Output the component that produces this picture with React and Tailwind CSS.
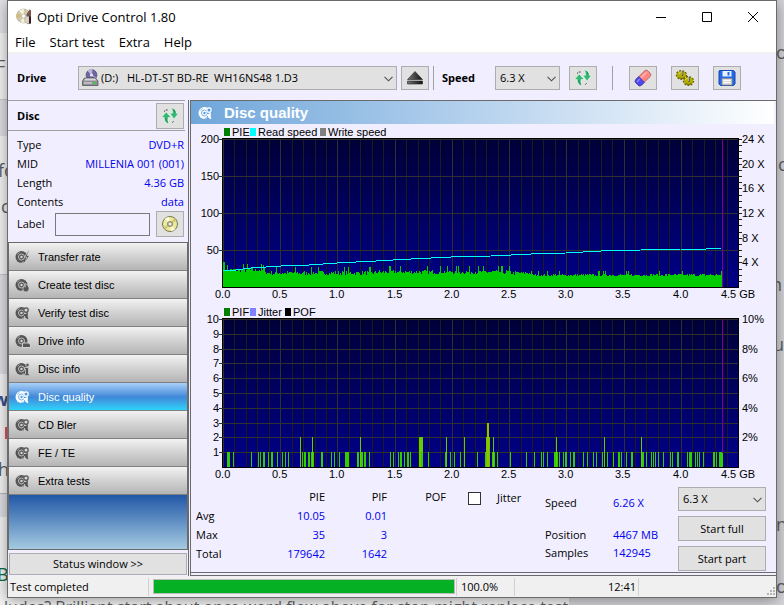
import React from 'react';

const navItems = [
    { label: 'Transfer rate', badge: 'bolt' },
    { label: 'Create test disc', badge: 'flame' },
    { label: 'Verify test disc', badge: 'lens' },
    { label: 'Drive info', badge: 'drive' },
    { label: 'Disc info', badge: 'info' },
    { label: 'Disc quality', badge: 'lens', active: true },
    { label: 'CD Bler', badge: 'lens' },
    { label: 'FE / TE', badge: 'lens' },
    { label: 'Extra tests', badge: 'lens' },
];

const discInfo = [
    ['Type', 'DVD+R'],
    ['MID', 'MILLENIA 001 (001)'],
    ['Length', '4.36 GB'],
    ['Contents', 'data'],
];

// Plot area inside each chart, in chart units
const LEFT = 32;
const RIGHT = 547;
const TOP = 14;
const BOTTOM = 162;
const END = 531;

// [x, width, count] of every PIF reading
const pif = [
    [36, 3, 1], [42, 1, 1], [60, 1, 1], [67, 1, 1], [69, 1, 1], [72, 2, 1], [77, 1, 1], [80, 2, 1],
    [86, 1, 1], [91, 1, 1], [94, 1, 1], [97, 1, 1], [109, 1, 2], [111, 1, 1], [113, 2, 1], [117, 2, 1],
    [120, 3, 1], [121, 1, 2], [130, 2, 1], [140, 1, 1], [143, 1, 1], [148, 1, 1], [154, 4, 1], [166, 2, 1],
    [169, 1, 2], [170, 2, 1], [173, 2, 1], [178, 1, 1], [199, 1, 1], [202, 1, 1], [207, 1, 1], [209, 2, 1],
    [213, 1, 1], [216, 2, 1], [219, 1, 1], [228, 4, 2], [230, 2, 1], [237, 1, 1], [254, 1, 1], [255, 1, 2],
    [259, 1, 1], [263, 1, 1], [269, 1, 1], [273, 1, 2], [286, 1, 1], [294, 1, 1], [295, 4, 2], [296, 2, 3],
    [301, 3, 1], [302, 1, 2], [306, 1, 1], [319, 1, 1], [335, 1, 1], [343, 1, 1], [350, 1, 1], [352, 1, 1],
    [356, 1, 1], [363, 4, 1], [365, 1, 2], [368, 1, 1], [372, 1, 1], [374, 2, 1], [379, 1, 1], [382, 2, 1],
    [392, 1, 1], [396, 1, 1], [402, 1, 1], [405, 1, 1], [411, 1, 1], [413, 1, 2], [416, 1, 1], [422, 1, 1],
    [427, 2, 1], [430, 1, 1], [435, 1, 1], [440, 2, 1], [450, 1, 2], [451, 2, 1], [455, 1, 1], [460, 1, 1],
    [462, 1, 1], [464, 1, 1], [467, 1, 1], [472, 1, 1], [479, 1, 1], [481, 1, 1], [486, 2, 1], [496, 1, 1],
    [498, 3, 1], [504, 1, 1], [506, 1, 1], [508, 1, 1], [512, 1, 1], [522, 2, 1], [525, 1, 1], [528, 4, 1],
];
const pifColors = ['', '#33cc00', '#66cc00', '#99bb00'];

const readSpeed = [
    [32, 146], [45, 145], [60, 143], [90, 141], [118, 140], [146, 138], [185, 136], [220, 134], [260, 132],
    [300, 131], [340, 129], [375, 128], [410, 126], [450, 125], [490, 124], [515, 124], [530, 123],
];

// Outline of the PIE error area, one step per unit
function pieArea() {
    let seed = 7;
    let d = `M${LEFT} ${BOTTOM}`;
    for (let x = LEFT; x < END; x++) {
        seed = (seed * 16807) % 2147483647;
        const r = seed / 2147483647;
        const calm = x > 340;
        let h = (calm ? 11 : 12) + r * (calm ? 2 : 4);
        if (x < 75) h += 3;
        if (x > 185 && x < 320) h += 1;
        if (r > 0.92) h += calm ? 3 : 4;
        if (x < 34) h = 25;
        if (x === 36 || x === 72) h = 22;
        d += `V${BOTTOM - Math.round(h)}H${x + 1}`;
    }
    return `${d}V${BOTTOM}Z`;
}

function Chart({ id, title, legend, rows, leftLabels, rightLabels, minorTicks, children }) {
    const gridX = Array.from({ length: 45 }, (_, i) => Math.round(LEFT + (i * (RIGHT - LEFT)) / 45));
    const rowY = (i) => Math.round(TOP + (i * (BOTTOM - TOP)) / rows);
    return (
        <svg viewBox="0 0 583 180" className="block h-auto w-full" role="img" aria-label={title}
            fontFamily="'Liberation Sans', Arial, sans-serif" fontSize="11" fill="#000">
            <defs>
                <linearGradient id={id} x1="0" y1="0" x2="0" y2="1">
                    <stop offset="0" stopColor="#000038" />
                    <stop offset="1" stopColor="#000088" />
                </linearGradient>
            </defs>
            {legend.map(([text, color, x]) => (
                <g key={text}>
                    <rect x={x} y="3" width="6" height="8" fill={color} />
                    <text x={x + 8} y="11">{text}</text>
                </g>
            ))}
            <g shapeRendering="crispEdges">
                <rect x={LEFT - 1} y={TOP - 1} width={RIGHT - LEFT + 2} height={BOTTOM - TOP + 2} fill="#000" />
                <rect x={LEFT} y={TOP} width={RIGHT - LEFT} height={BOTTOM - TOP} fill={`url(#${id})`} />
                {gridX.map((x, i) => (
                    <rect key={x} x={x} y={TOP} width="1" height={BOTTOM - TOP} fill={i % 5 ? '#1c1c1c' : '#303030'} />
                ))}
                {Array.from({ length: rows }, (_, i) => (
                    <rect key={i} x={LEFT - 4} y={rowY(i)} width={RIGHT - LEFT + 4} height="1" fill="#303030" />
                ))}
                {minorTicks && Array.from({ length: 24 }, (_, i) => (
                    <rect key={i} x={RIGHT + 1} y={Math.round(TOP + (i * 148) / 24)} width="3" height="1" fill="#222" />
                ))}
                {children}
                <rect x={END} y={TOP} width="1" height={id === 'pifBg' ? 134 : 148} fill="#800080" />
            </g>
            {leftLabels.map((text, i) => (
                <text key={text} x={LEFT - 4} y={rowY(i) + 4} textAnchor="end">{text}</text>
            ))}
            {rightLabels.map((text, i) => (
                <text key={text} x={RIGHT + 4} y={Math.round(TOP + (i * 148) / rightLabels.length) + 4}>{text}</text>
            ))}
            {Array.from({ length: 9 }, (_, i) => (
                <text key={i} x={Math.round(LEFT + i * 57.2) - 8} y="173">{(i / 2).toFixed(1)}</text>
            ))}
            <text x={RIGHT} y="173" textAnchor="middle">4.5 GB</text>
        </svg>
    );
}

function NavIcon({ badge, active }) {
    const fg = active ? '#ffffff' : '#555555';
    const hole = active ? '#4f9be6' : '#d9d9d9';
    return (
        <svg width="16" height="14" viewBox="0 0 16 14" aria-hidden="true">
            <circle cx="6.5" cy="7" r="6" fill={fg} />
            <circle cx="6.5" cy="7" r="3" fill="none" stroke={hole} strokeWidth="0.8" />
            <circle cx="6.5" cy="7" r="1.2" fill={hole} />
            <path d="M2.5 4.5a5 5 0 0 1 2-2M9 11.8a5 5 0 0 1-2.5.5" stroke={hole} strokeWidth="0.7" fill="none" />
            {badge === 'bolt' && <path d="M13.5 0.5 9.5 7h2.3l-1.8 6 4.5-7.5h-2.4l2-5z" fill={fg} stroke={hole} strokeWidth="0.7" />}
            {badge === 'flame' && <path d="M10 5.5c3 1.5 4 3.5 4 5.3a3 3 0 0 1-6 .2c0-1.5 1-2 .8-3.2 1 .3 1.3 1 1.4 1.5.4-1.3.3-2.5-.2-3.8z" fill={fg} stroke={hole} strokeWidth="0.6" />}
            {badge === 'lens' && (
                <g fill="none" stroke={hole}>
                    <path d="M8.5 2.5h6v4h-6z" fill={hole} stroke="none" />
                    <circle cx="11" cy="4" r="2.2" stroke={fg} strokeWidth="1.3" />
                    <path d="M12 6.5v6M9 8.5l4 4.3" stroke={fg} strokeWidth="1.6" />
                    <path d="M9 7.5h2.5M9.5 10v3" strokeWidth="0.8" />
                </g>
            )}
            {badge === 'drive' && <path d="M7.5 9h6.5l1.5 2v2.5h-8z" fill={fg} stroke={hole} strokeWidth="0.9" />}
            {badge === 'info' && (
                <g stroke={hole} strokeWidth="0.7" fill={fg}>
                    <circle cx="12.5" cy="3" r="1.7" />
                    <path d="M9.5 5.5h4v6.5h1v1.7H9.3V12h1.2V7.2h-1z" />
                </g>
            )}
        </svg>
    );
}

function RefreshIcon() {
    return (
        <svg width="18" height="18" viewBox="0 0 18 18" aria-hidden="true">
            <g fill="#32b872" stroke="#fff" strokeWidth="0.5">
                <path d="M5.2 5 .5 10.5h2.7c0 3.200 1.300 5.500 4.800 6.500-1-2-1.200-4-.9-6.500h3z" />
                <path d="M9.500.8c1.800 1.200 2.200 3 2 5.500H8.800L13 12l4.500-5.700h-2.300C15.200 3.500 13.500 1.300 9.500.8z" />
            </g>
            <path d="M3 4.500 5 3h2.500M12.500 14.500 10.500 16" stroke="#333" strokeDasharray="1.500 1" fill="none" />
            <path d="M4.800 11c0 2 .6 3.500 1.800 4.700M12.500 2.300l1.800 3.200" stroke="#1e7a4a" strokeWidth="0.8" fill="none" />
        </svg>
    );
}

function EraserIcon() {
    return (
        <svg width="18" height="18" viewBox="0 0 18 18" aria-hidden="true">
            <g transform="rotate(-45 9 9)">
                <rect x="0.5" y="5" width="17" height="8" rx="2.5" fill="#ff8585" stroke="#a05a5a" strokeWidth="0.7" />
                <path d="M7 5H3A2.5 2.5 0 0 0 .5 7.5v3A2.5 2.5 0 0 0 3 13h4z" fill="#4a4af0" stroke="#3434a8" strokeWidth="0.7" />
                <path d="M8 7.5h8" stroke="#ffb5b5" strokeWidth="1.5" />
                <path d="M2 7.5h4" stroke="#8585ff" strokeWidth="1.5" />
            </g>
        </svg>
    );
}

function GearsIcon() {
    return (
        <svg width="20" height="18" viewBox="0 0 20 18" aria-hidden="true">
            <g fill="#b5ad00" stroke="#5c5700" strokeWidth="0.7">
                <ellipse cx="6.500" cy="6" rx="4.800" ry="4" strokeWidth="1.800" strokeDasharray="1.800 1.200" />
                <ellipse cx="6.500" cy="6" rx="4.500" ry="3.700" stroke="none" />
                <ellipse cx="13.500" cy="12" rx="4.800" ry="4" strokeWidth="1.800" strokeDasharray="1.800 1.200" />
                <ellipse cx="13.500" cy="12" rx="4.500" ry="3.700" stroke="none" />
            </g>
            <path d="M3.500 5c.8-1.500 2-2 3-2M10.500 11c.8-1.500 2-2 3-2" stroke="#efe84a" fill="none" />
            <path d="M3.500 8.300c1.500 1.400 4.500 1.400 6 0M10.500 14.300c1.500 1.400 4.500 1.400 6 0" stroke="#6e6800" fill="none" />
            <path d="M7.500 2v5M14 8v5" stroke="#5a5a4a" strokeWidth="1.500" />
            <path d="M7 2v4M13.500 8v4" stroke="#ddd" strokeWidth="0.6" />
        </svg>
    );
}

function SaveIcon() {
    return (
        <svg width="18" height="16" viewBox="0 0 18 16" aria-hidden="true">
            <path d="M1.5.5h14l1.500 1.500v12l-1.500 1.500h-13L1 14V1z" fill="#2469e8" stroke="#1747b4" />
            <path d="M4.5 1h9v5.5h-9z" fill="#e9f2ff" />
            <path d="M9.5 2h2v3.5h-2z" fill="#2469e8" />
            <path d="M4 8.5h10V15H4z" fill="#dcdcdc" stroke="#8c8c8c" strokeWidth="0.8" />
            <path d="M5.5 10.5h7M5.5 12.5h7" stroke="#fff" />
        </svg>
    );
}

function DriveIcon() {
    return (
        <svg width="18" height="18" viewBox="0 0 18 18" aria-hidden="true">
            <circle cx="10.5" cy="6" r="5.5" fill="#6f649c" stroke="#4d4570" strokeWidth="0.6" />
            <path d="M10.5 6 7 1.8a5.5 5.5 0 0 1 4-1.2zM10.5 6l4.5 3" fill="#bdb5e0" stroke="#bdb5e0" />
            <circle cx="10.5" cy="6" r="1.6" fill="#e9e6f5" />
            <path d="M3.5 9h11l2.500 3v4.500H1.500V12z" fill="#8e9096" stroke="#46484d" strokeWidth="0.7" />
            <path d="M4.5 9.500h9.500l1.500 2H3z" fill="#d7d8db" />
            <path d="M3 14h8" stroke="#e6e6e6" />
            <path d="M13 13.300h2V15h-2z" fill="#22dd33" />
        </svg>
    );
}

function AppIcon() {
    return (
        <svg width="16" height="17" viewBox="0 0 16 17" aria-hidden="true">
            <circle cx="7.5" cy="8" r="7" fill="#cfc9ae" stroke="#a5a08c" strokeWidth="0.6" />
            <path d="M7.5 8 3 2.5a7 7 0 0 1 5-1.5zM7.5 8l-3 6.3a7 7 0 0 0 4 .5z" fill="#f5f1dc" />
            <path d="M7.5 8 1 5.5a7 7 0 0 0 0 4.5z" fill="#d6b878" />
            <circle cx="7.5" cy="8" r="2" fill="#fff" stroke="#aaa" strokeWidth="0.6" />
            <path d="M10.500 6.500 13.500 1.500l1.500.8v13l-4 .9z" fill="#6b5a52" />
            <path d="M10 8.500h3V15.500h-3z" fill="#d8d2cc" />
            <path d="M13 8.5h2v7h-2z" fill="#381a18" />
            <path d="M13.7 3v3" stroke="#c0392b" />
        </svg>
    );
}

function LabelDiscIcon() {
    return (
        <svg width="18" height="16" viewBox="0 0 18 16" aria-hidden="true">
            <circle cx="9" cy="8" r="7.5" fill="#ece99a" stroke="#77754c" />
            <path d="M9 8 4 2.5A7 7 0 0 1 8 1zM9 8l5 5.5A7 7 0 0 1 10 15z" fill="#fffee0" />
            <path d="M9 8 15.5 5A7 7 0 0 0 13 2.5zM9 8 2.5 11A7 7 0 0 0 5 13.5z" fill="#cfcb70" />
            <circle cx="9" cy="8" r="2.6" fill="#b9b9b0" stroke="#77754c" strokeWidth="0.7" />
            <circle cx="9" cy="8" r="1" fill="#fff" />
        </svg>
    );
}

function ToolButton({ label, children, className = '' }) {
    return (
        <button type="button" aria-label={label}
            className={`flex w-7 shrink-0 items-center justify-center border border-[#adadad] bg-[#e1e1e1] ${className}`}>
            {children}
        </button>
    );
}

function Dropdown({ label, value, className = '', selectClass = 'pl-1', icon }) {
    return (
        <div className={`relative h-6 ${className}`}>
            <select aria-label={label} defaultValue={value}
                className={`h-full w-full appearance-none border border-[#adadad] bg-[#e1e1e1] pr-5 ${selectClass}`}>
                <option value={value}>{value}</option>
            </select>
            {icon && <span className="pointer-events-none absolute top-[3px] left-[3px]">{icon}</span>}
            <svg width="9" height="6" viewBox="0 0 9 6" className="pointer-events-none absolute top-[10px] right-1" aria-hidden="true">
                <path d="M0.5 0.8l4 4 4-4" fill="none" stroke="#505050" strokeWidth="1.1" />
            </svg>
        </div>
    );
}

// Page lying behind the window, only its edges show
function Backdrop() {
    return (
        <div className="absolute inset-0 overflow-hidden bg-[#d6d6da] text-[18px] leading-none text-[#5c6066]" aria-hidden="true">
            <div className="flex h-full w-[569px] flex-col bg-[#f5f5f5]">
                <div className="h-[33px] bg-[#e3e4e9]" />
                <div className="h-[67px] border-b border-[#c8c8c8]" />
                <div className="h-9 bg-[#dfe0e5]" />
                <div className="h-[139px] border-b border-[#c8c8c8]" />
                <div className="h-[99px] bg-[#dfe0e5]" />
                <div className="h-[119px]" />
                <div className="h-6 border-t border-[#b8b8b8] bg-[#dfe0e5]" />
            </div>
            <span className="absolute top-[57px] -left-[4px]">F</span>
            <span className="absolute top-[161px] -left-[2px]">fo</span>
            <span className="absolute top-[197px] left-[1px]">c</span>
            <span className="absolute top-[390px] -left-[7px] font-bold text-[#34508f]">w</span>
            <span className="absolute top-[427px] left-[5px] h-3 w-2 bg-[#e8505a]" />
            <span className="absolute top-[460px] -left-[2px]">h</span>
            <span className="absolute top-[565px] -left-[3px] text-[#0c6b45]">B</span>
            <span className="absolute top-[43px] left-[776px]">o</span>
            <span className="absolute top-[155px] left-[767px]">uc</span>
            <span className="absolute top-[275px] left-[771px]">n</span>
            <span className="absolute top-[335px] left-[773px]">u</span>
            <span className="absolute top-[515px] left-[766px]">an</span>
            <span className="absolute top-[577px] left-[776px]">o</span>
            <span className="absolute top-[599px] left-[4px] text-[16px] whitespace-nowrap">
                ludes? Brilliant start about once word flow above for stop might replace test
            </span>
        </div>
    );
}

function TitleBar() {
    return (
        <header className="bg-white">
            <div className="flex h-[31px] items-center pl-2">
                <AppIcon />
                <h1 className="ml-[5px] text-[13px]">Opti Drive Control 1.80</h1>
                <div className="ml-auto flex">
                    <button type="button" aria-label="Minimize" className="flex h-[30px] w-[46px] items-center justify-center">
                        <svg width="10" height="10"><path d="M0 5.5h10" stroke="#000" /></svg>
                    </button>
                    <button type="button" aria-label="Maximize" className="flex h-[30px] w-[46px] items-center justify-center">
                        <svg width="10" height="10"><path d="M.5.5h9v9h-9z" stroke="#000" fill="none" /></svg>
                    </button>
                    <button type="button" aria-label="Close" className="flex h-[30px] w-[46px] items-center justify-center">
                        <svg width="10" height="10"><path d="M0 0l10 10M10 0L0 10" stroke="#000" /></svg>
                    </button>
                </div>
            </div>
            <nav className="flex h-5 items-center gap-[14px] pl-[7px] text-[13px]">
                <button type="button">File</button>
                <button type="button">Start test</button>
                <button type="button">Extra</button>
                <button type="button">Help</button>
            </nav>
        </header>
    );
}

function Toolbar() {
    return (
        <div className="flex h-[49px] items-center border-t-2 border-[#f0f0f0] pr-[35px] pl-[9px]">
            <span className="w-[61px] font-bold">Drive</span>
            <Dropdown label="Drive" value={'(D:)\u00a0\u00a0\u00a0HL-DT-ST BD-RE\u00a0\u00a0WH16NS48 1.D3'} icon={<DriveIcon />}
                className="min-w-0 flex-1" selectClass="pl-[22px]" />
            <ToolButton label="Eject" className="ml-1 h-6">
                <svg width="16" height="14" viewBox="0 0 16 14" aria-hidden="true">
                    <defs>
                        <linearGradient id="eject" x1="0" x2="1">
                            <stop offset="0" stopColor="#777" />
                            <stop offset="1" stopColor="#111" />
                        </linearGradient>
                    </defs>
                    <path d="M8 0.5 15.5 8.5H.5zM.5 10h15v3H.5z" fill="url(#eject)" stroke="#222" strokeWidth="0.6" />
                </svg>
            </ToolButton>
            <span className="ml-1 h-6 w-px bg-[#a0a0a0]" />
            <span className="ml-2 w-[53px] font-bold">Speed</span>
            <Dropdown label="Speed" value="6.3 X" className="w-[65px]" />
            <ToolButton label="Refresh speeds" className="ml-[9px] h-6"><RefreshIcon /></ToolButton>
            <span className="mr-4 ml-[15px] h-6 w-px bg-[#a0a0a0]" />
            <div className="flex gap-[14px]">
                <ToolButton label="Erase" className="h-6"><EraserIcon /></ToolButton>
                <ToolButton label="Options" className="h-6"><GearsIcon /></ToolButton>
                <ToolButton label="Save" className="h-6"><SaveIcon /></ToolButton>
            </div>
        </div>
    );
}

function Sidebar() {
    return (
        <aside className="flex w-[181px] shrink-0 flex-col border-r border-[#6b6b6b]">
            <div className="mr-[3px] flex h-[31px] items-center justify-between border-y border-[#a0a0a0] pr-px pl-[9px]">
                <h2 className="font-bold">Disc</h2>
                <ToolButton label="Refresh disc" className="h-[26px]"><RefreshIcon /></ToolButton>
            </div>
            <div className="h-[111px] pt-[4px] pr-1 pl-[9px]">
                <dl>
                    {discInfo.map(([name, value]) => (
                        <div key={name} className="flex h-[19px] items-center justify-between">
                            <dt>{name}</dt>
                            <dd className="text-[#0000ee]">{value}</dd>
                        </div>
                    ))}
                </dl>
                <div className="flex h-[26px] items-center">
                    <label htmlFor="disc-label" className="w-[38px]">Label</label>
                    <input id="disc-label" type="text" className="h-[23px] min-w-0 flex-1 border border-[#7a7a7a] bg-[#f0eeff] px-1" />
                    <ToolButton label="Edit label" className="ml-[6px] h-[26px]"><LabelDiscIcon /></ToolButton>
                </div>
            </div>
            <nav className="flex flex-1 flex-col border-x border-t border-[#6b6b6b] bg-linear-to-b from-[#1f55a5] from-82% to-[#a5cae0] font-['Liberation_Sans',Arial,sans-serif] text-[11px]">
                {navItems.map((item) => (
                    <button key={item.label} type="button"
                        className={`flex h-7 items-center gap-[7px] border-b border-[#808080] pl-[6px] ${item.active
                            ? 'bg-linear-to-b from-[#a9d0f7] via-[#3f87d8] via-52% to-[#2bd3fa] text-white'
                            : 'bg-linear-to-b from-[#f2f2f2] via-[#d2d2d2] to-[#b4b4b4] text-black'}`}>
                        <NavIcon badge={item.badge} active={item.active} />
                        {item.label}
                    </button>
                ))}
            </nav>
            <div className="h-[27px] border-t border-[#6b6b6b] pt-[3px] pr-px pl-px">
                <button type="button" className="h-[22px] w-full border border-[#adadad] bg-[#e1e1e1]">Status window &gt;&gt;</button>
            </div>
        </aside>
    );
}

function Results() {
    return (
        <div className="flex h-[87px] items-start justify-between pr-2 pl-[5px]">
            <div className="flex items-start gap-[22px] pt-[2px]">
                <table className="text-right [&_td]:h-[19px] [&_td]:p-0 [&_td]:text-[#0000ee] [&_th]:h-[19px] [&_th]:p-0 [&_th]:font-normal">
                    <thead>
                        <tr>
                            <th className="w-[67px]"></th>
                            <th className="w-[62px]">PIE</th>
                            <th className="w-[62px]">PIF</th>
                            <th className="w-[59px]">POF</th>
                        </tr>
                    </thead>
                    <tbody>
                        <tr><th className="text-left">Avg</th><td>10.05</td><td>0.01</td><td></td></tr>
                        <tr><th className="text-left">Max</th><td>35</td><td>3</td><td></td></tr>
                        <tr><th className="text-left">Total</th><td>179642</td><td>1642</td><td></td></tr>
                    </tbody>
                </table>
                <label className="flex items-center gap-4 pt-[2px]">
                    <input type="checkbox" className="h-[13px] w-[13px] appearance-none border border-[#333] bg-white" />
                    Jitter
                </label>
            </div>
            <div className="flex gap-[19px]">
                <dl className="grid grid-cols-[68px_46px] content-start pt-[9px]">
                    <dt className="h-8">Speed</dt><dd className="text-[#0000ee]">6.26 X</dd>
                    <dt className="h-[18px]">Position</dt><dd className="whitespace-nowrap text-[#0000ee]">4467 MB</dd>
                    <dt className="h-[18px]">Samples</dt><dd className="text-[#0000ee]">142945</dd>
                </dl>
                <div className="flex w-[88px] flex-col gap-[5px] pt-[2px]">
                    <Dropdown label="Test speed" value="6.3 X" />
                    <button type="button" className="h-[25px] border border-[#adadad] bg-[#e1e1e1]">Start full</button>
                    <button type="button" className="h-[25px] border border-[#adadad] bg-[#e1e1e1]">Start part</button>
                </div>
            </div>
        </div>
    );
}

function QualityPanel() {
    return (
        <main className="ml-px flex min-w-0 flex-1 flex-col border-t border-l border-[#6b6b6b]">
            <div className="flex-1 border-b border-[#6b6b6b] pr-[2px]">
                <h2 className="mb-px flex h-[23px] items-center gap-[10px] bg-linear-to-r from-[#6fa6da] to-white pl-[7px] font-['Liberation_Sans',Arial,sans-serif] text-[15px] font-bold text-white">
                    <NavIcon badge="lens" active />
                    Disc quality
                </h2>
                <Chart id="pieBg" title="PIE and read speed" rows={4} minorTicks
                    legend={[['PIE', '#008000', 33], ['Read speed', '#00ffff', 59], ['Write speed', '#808080', 129]]}
                    leftLabels={['200', '150', '100', '50']}
                    rightLabels={['24 X', '20 X', '16 X', '12 X', '8 X', '4 X']}>
                    <path d={pieArea()} fill="#00cc00" />
                    <polyline points={readSpeed.join(' ')} fill="none" stroke="#00ffff" />
                </Chart>
                <Chart id="pifBg" title="PIF, jitter and POF" rows={10}
                    legend={[['PIF', '#008000', 33], ['Jitter', '#8080ff', 59], ['POF', '#000000', 94]]}
                    leftLabels={['10', '9', '8', '7', '6', '5', '4', '3', '2', '1']}
                    rightLabels={['10%', '8%', '6%', '4%', '2%']}>
                    {pif.map(([x, w, n], i) => (
                        <rect key={i} x={x} y={BOTTOM - Math.round(n * 14.8)} width={w} height={Math.round(n * 14.8)} fill={pifColors[n]} />
                    ))}
                </Chart>
                <Results />
            </div>
            <div className="h-[3px] border-b border-[#6b6b6b]" />
        </main>
    );
}

function StatusBar() {
    return (
        <footer className="flex h-[21px] items-center bg-[#f0f0f0]">
            <span className="w-[140px] pl-[2px]">Test completed</span>
            <span className="h-[18px] w-px bg-[#d0d0d0]" />
            <div role="progressbar" aria-label="Test progress" aria-valuenow={100}
                className="mr-px ml-1 h-[15px] min-w-0 flex-1 border border-[#bcbcbc] bg-[#e6e6e6]">
                <div className="h-full w-full bg-[#06b025]" />
            </div>
            <span className="h-[18px] w-[59px] border-x border-[#d0d0d0] pl-1">100.0%</span>
            <span className="h-[18px] w-[124px] border-r border-[#d0d0d0] pr-[2px] text-right">12:41</span>
            <svg width="10" height="10" viewBox="0 0 10 10" className="mt-2 ml-[127px]" fill="#b4b4b4" aria-hidden="true">
                <path d="M7 1h2v2H7zM4 4h2v2H4zM7 4h2v2H7zM1 7h2v2H1zM4 7h2v2H4zM7 7h2v2H7z" />
            </svg>
        </footer>
    );
}

export default function App() {
    return (
        <div className="relative min-h-screen overflow-hidden px-[7px] pb-[7px] font-['Open_Sans','Noto_Sans',sans-serif] text-[11px] leading-[18px] text-black">
            <Backdrop />
            <div className="relative border border-[#6b6b6b] bg-[#f0eeff] shadow-[0_2px_14px_rgba(0,0,0,0.4)]">
                <TitleBar />
                <Toolbar />
                <div className="-mt-px flex">
                    <Sidebar />
                    <QualityPanel />
                </div>
                <StatusBar />
            </div>
        </div>
    );
}
